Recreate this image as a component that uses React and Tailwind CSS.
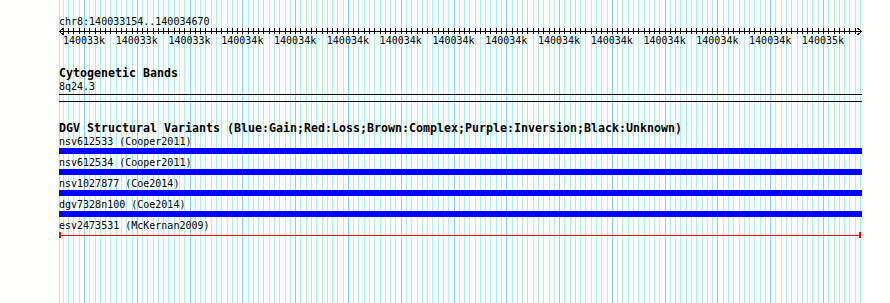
import React from 'react';

const STEP = 739 / 140;
const grid = [];
for (let k = -4; k <= 147; k++) grid.push({ x: Math.round(84 + k * STEP), major: k % 10 === 0 });

const labels = [
  '140033k', '140033k', '140033k', '140034k', '140034k', '140034k', '140034k', '140034k',
  '140034k', '140034k', '140034k', '140034k', '140034k', '140034k', '140035k',
];

const variants = [
  { name: 'nsv612533 (Cooper2011)', kind: 'gain' },
  { name: 'nsv612534 (Cooper2011)', kind: 'gain' },
  { name: 'nsv1027877 (Coe2014)', kind: 'gain' },
  { name: 'dgv7328n100 (Coe2014)', kind: 'gain' },
  { name: 'esv2473531 (McKernan2009)', kind: 'loss' },
];

const Backdrop = () => (
  <svg className="absolute inset-0" width="890" height="303" shapeRendering="crispEdges">
    <line x1="59.5" y1="0" x2="59.5" y2="303" stroke="#afeeee" />
    {grid.map((g, i) => (
      <line key={i} x1={g.x + 0.5} y1="0" x2={g.x + 0.5} y2="303" stroke={g.major ? '#87cefa' : '#afeeee'} />
    ))}
    {/* ruler */}
    <line x1="59" y1="31.5" x2="862" y2="31.5" stroke="#000" />
    {grid.filter((g) => g.x < 858).map((g, i) => (
      <line key={i} x1={g.x + 0.5} y1="28" x2={g.x + 0.5} y2="34" stroke="#000" />
    ))}
    <path d="M63.5 28 L59.5 31.5 L63.5 35" fill="none" stroke="#000" />
    <path d="M857.5 28 L861.5 31.5 L857.5 35" fill="none" stroke="#000" />
  </svg>
);

const Row = ({ children, bold }) => (
  <div className={`h-[13px] leading-[13px] whitespace-nowrap text-black ${bold ? 'font-bold text-[11.63px]' : 'text-[10px]'}`}>
    {children}
  </div>
);

export default function App() {
  return (
    <div className="relative w-[890px] h-[303px] overflow-hidden bg-[#fcfffc] font-['DejaVu_Sans_Mono',monospace]">
      <Backdrop />
      <div className="relative w-[862px] pl-[59px] pt-[15px]">
        <Row>chr8:140033154..140034670</Row>
        <div className="h-[6px]" />
        <div className="flex ml-[-1.4px]">
          {labels.map((l, i) => (
            <div key={i} className="w-[52.786px] shrink-0 text-center text-[10px] leading-[13px] h-[13px]">{l}</div>
          ))}
        </div>

        <div className="mt-[20px]">
          <Row bold>Cytogenetic Bands</Row>
          <Row>8q24.3</Row>
          <div className="mt-px h-[8px] border-y border-black" />
        </div>

        <div className="mt-[20px]">
          <Row bold>DGV Structural Variants (Blue:Gain;Red:Loss;Brown:Complex;Purple:Inversion;Black:Unknown)</Row>
          {variants.map((v, i) => (
            <div key={i} className={i > 0 ? 'mt-[2px]' : ''}>
              <Row>{v.name}</Row>
              {v.kind === 'gain' ? (
                <div className="h-[6px] bg-[#0000ff]" />
              ) : (
                <div className="flex items-center w-[802px] h-[6px]">
                  <div className="w-[2px] h-full bg-[#ff0000]" />
                  <div className="flex-1 h-px bg-[#ff0000]" />
                  <div className="w-[2px] h-full bg-[#ff0000]" />
                </div>
              )}
            </div>
          ))}
        </div>
      </div>
    </div>
  );
}
